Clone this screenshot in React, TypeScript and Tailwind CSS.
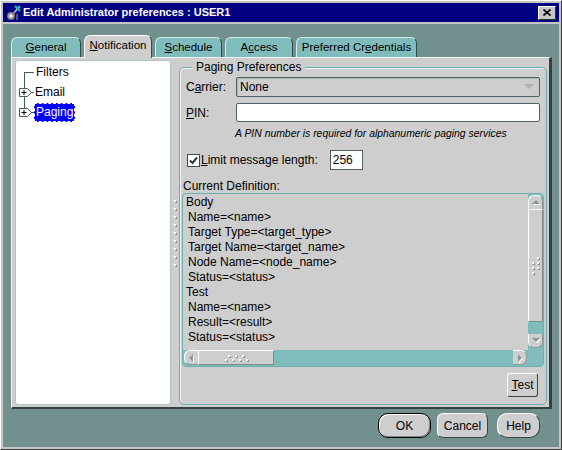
import React from 'react';

const LINES = [
  { text: 'Body', indent: false },
  { text: 'Name=<name>', indent: true },
  { text: 'Target Type=<target_type>', indent: true },
  { text: 'Target Name=<target_name>', indent: true },
  { text: 'Node Name=<node_name>', indent: true },
  { text: 'Status=<status>', indent: true },
  { text: 'Test', indent: false },
  { text: 'Name=<name>', indent: true },
  { text: 'Result=<result>', indent: true },
  { text: 'Status=<status>', indent: true },
];

function Dot() {
  return <span className="block w-[2px] h-[2px] bg-white shadow-[1px_1px_0_#8c8c8c]" />;
}

function Tab({ children, w, active }: { children: React.ReactNode; w: string; active?: boolean }) {
  return (
    <div
      className={
        active
          ? `${w} h-[23px] -mb-[1px] relative z-10 pb-[2px] bg-[#cecece] border-t border-l border-white border-r border-r-[#3c4848] rounded-t-[6px] flex items-center justify-center text-[11.5px]`
          : `${w} h-[20px] bg-[#80bcbc] border-t border-l border-[#d6eeee] border-r border-r-[#2e4c4c] rounded-t-[6px] flex items-center justify-center text-[11.5px]`
      }
    >
      {children}
    </div>
  );
}

function Arrow({ dir }: { dir: 'up' | 'down' | 'left' | 'right' }) {
  const pts = {
    up: '1,6 5,2 9,6',
    down: '1,2 5,6 9,2',
    left: '6,1 2,5 6,9',
    right: '3,1 7,5 3,9',
  }[dir];
  return (
    <svg width="10" height="10" viewBox="0 0 10 10">
      <polygon points={pts} fill="#ffffff" transform="translate(1,1)" />
      <polygon points={pts} fill="#8c9696" />
    </svg>
  );
}

function TreeCell({ kind }: { kind: 'first' | 'mid' | 'last' }) {
  return (
    <svg width="18" height="20" viewBox="0 0 18 20" className="shrink-0">
      {kind === 'first' && (
        <>
          <line x1="8.5" y1="10" x2="8.5" y2="20" stroke="#3e5c5c" />
          <line x1="8" y1="10.5" x2="18" y2="10.5" stroke="#3e5c5c" />
        </>
      )}
      {kind === 'mid' && <line x1="8.5" y1="0" x2="8.5" y2="20" stroke="#3e5c5c" />}
      {kind === 'last' && <line x1="8.5" y1="0" x2="8.5" y2="7" stroke="#3e5c5c" />}
      {kind !== 'first' && (
        <>
          <path d="M3.5 6.5 H11.5 L15.5 10.5 L11.5 14.5 H3.5 Z" fill="#ffffff" stroke="#3e5c5c" />
          <line x1="15" y1="10.5" x2="18" y2="10.5" stroke="#3e5c5c" />
          <line x1="5.5" y1="10.5" x2="10.5" y2="10.5" stroke="#000" />
          <line x1="8" y1="8" x2="8" y2="13" stroke="#000" />
        </>
      )}
    </svg>
  );
}

export default function App() {
  return (
    <div className="w-[562px] h-[450px] bg-[#c6c6c6] border-l border-t border-white border-r border-b border-r-[#3a3a3a] border-b-[#3a3a3a] p-[2px] flex flex-col font-['Liberation_Sans',Arial,sans-serif] text-black overflow-hidden">
      {/* Title bar */}
      <div className="h-[19px] bg-[#000080] flex items-center pl-[2px] shrink-0">
        <svg width="17" height="16" viewBox="0 0 17 16" className="shrink-0">
          <circle cx="6" cy="11" r="4" fill="#9a9a9a" stroke="#303030" strokeWidth="1" strokeDasharray="2 1" />
          <circle cx="6" cy="11" r="1.5" fill="#ffffff" />
          <line x1="9" y1="8" x2="13" y2="3" stroke="#c0c0c0" strokeWidth="1.5" />
          <path d="M10 1 L15 6" stroke="#20c0a0" strokeWidth="2" />
          <circle cx="14" cy="2" r="1.5" fill="#40a0ff" />
          <line x1="12" y1="9" x2="12" y2="15" stroke="#a0a0a0" />
        </svg>
        <span className="ml-[1px] text-white font-bold text-[11px] leading-none">
          Edit Administrator preferences : USER1
        </span>
        <div className="ml-auto mr-[3px] w-[18px] h-[14px] bg-[#c6c6c6] border-t border-l border-white border-r border-b border-r-[#303030] border-b-[#303030] flex items-center justify-center">
          <svg width="8" height="7" viewBox="0 0 8 7">
            <path d="M0.5 0.5 L7.5 6.5 M7.5 0.5 L0.5 6.5" stroke="#000" strokeWidth="1.6" />
          </svg>
        </div>
      </div>

      {/* Body */}
      <div className="mt-[2px] flex-1 bg-[#71908e] flex flex-col pl-[8px] pr-[7px] pt-[11px]">
        {/* Tabs */}
        <div className="h-[22px] flex items-end gap-[3px] shrink-0">
          <Tab w="w-[70px]">
            <span><span className="underline">G</span>eneral</span>
          </Tab>
          <Tab w="w-[68px]" active>
            <span><span className="underline">N</span>otification</span>
          </Tab>
          <Tab w="w-[67px]">
            <span><span className="underline">S</span>chedule</span>
          </Tab>
          <Tab w="w-[68px]">
            <span>A<span className="underline">c</span>cess</span>
          </Tab>
          <Tab w="w-[121px]">
            <span>Preferred Cr<span className="underline">e</span>dentials</span>
          </Tab>
        </div>

        {/* Tab panel */}
        <div className="h-[352px] shrink-0 bg-[#cecece] border-t border-l border-[#f4f4f4] border-r-[3px] border-b-[2px] border-r-[#34403f] border-b-[#34403f] flex pl-[3px] pt-[2px]">
          {/* Tree */}
          <div className="w-[156px] h-[345px] bg-white border border-[#b4c4c4] rounded-[3px] pt-[1px] text-[12px] shrink-0">
            <div className="flex items-center h-[20px]">
              <TreeCell kind="first" />
              <span className="ml-[2px]">Filters</span>
            </div>
            <div className="flex items-center h-[20px]">
              <TreeCell kind="mid" />
              <span className="ml-[1px]">Email</span>
            </div>
            <div className="flex items-center h-[20px]">
              <TreeCell kind="last" />
              <span className="bg-[#0000ff] text-white px-[1px] h-[19px] leading-[17px] border border-dashed border-white">
                Paging
              </span>
            </div>
          </div>

          {/* Splitter grip */}
          <div className="w-[8px] shrink-0 flex flex-col items-center pt-[140px] gap-[6px]">
            {Array.from({ length: 9 }).map((_, i) => (
              <Dot key={i} />
            ))}
          </div>

          {/* Paging preferences group */}
          <div className="mt-[7px] w-[368px] h-[338px] border border-[#68adad] rounded-[5px] shadow-[inset_1px_1px_0_#f4f4f4] flex flex-col text-[12px]">
            <span className="block w-fit ml-[12px] px-[4px] -mt-[8px] bg-[#cecece] leading-[14px]">
              Paging Preferences
            </span>

            <div className="mt-[3px] h-[20px] flex items-center pl-[6px] pr-[6px]">
              <span className="w-[50px] shrink-0">
                C<span className="underline">a</span>rrier:
              </span>
              <div className="flex-1 h-[20px] bg-[#cecece] border border-[#4e6464] rounded-[2px] shadow-[inset_1px_1px_0_#a8b8b8] flex items-center pl-[3px] pr-[5px]">
                <span>None</span>
                <svg width="10" height="6" viewBox="0 0 10 6" className="ml-auto">
                  <polygon points="0,0 10,0 5,5" fill="#b0b0b0" />
                </svg>
              </div>
            </div>

            <div className="mt-[6px] h-[19px] flex items-center pl-[6px] pr-[6px]">
              <span className="w-[50px] shrink-0">
                <span className="underline">P</span>IN:
              </span>
              <div className="flex-1 h-[19px] bg-white border border-[#4e6464] rounded-[2px]" />
            </div>

            <div className="mt-[6px] h-[11px] leading-[11px] pl-[55px] text-[10.4px] italic">
              A PIN number is required for alphanumeric paging services
            </div>

            <div className="mt-[11px] h-[20px] flex items-center pl-[7px]">
              <div className="w-[13px] h-[13px] bg-white border border-[#404848] flex items-center justify-center shrink-0">
                <svg width="9" height="9" viewBox="0 0 9 9">
                  <path d="M1 4.5 L3.5 7 L8 1.5" stroke="#2c3838" strokeWidth="2" fill="none" />
                </svg>
              </div>
              <span className="ml-[1px]">
                <span className="underline">L</span>imit message length:
              </span>
              <div className="ml-[12px] w-[33px] h-[20px] bg-white border border-[#4e6464] flex items-center pl-[2px]">
                256
              </div>
            </div>

            <div className="mt-[10px] leading-[12px] pl-[3px]">Current Definition:</div>

            {/* Definition text area */}
            <div className="mt-[1px] mx-[2px] h-[174px] border border-[#6cb0b0] rounded-[4px] flex flex-col overflow-hidden">
              <div className="flex flex-1 min-h-0">
                <div className="flex-1 pl-[3px] pt-[1px] leading-[15px]">
                  {LINES.map((l, i) => (
                    <div key={i} className={l.indent ? 'pl-[2px]' : ''}>
                      {l.text}
                    </div>
                  ))}
                </div>
                <div className="w-[15px] bg-[#80bcbc] flex flex-col pt-[1px] pb-[2px]">
                  <div className="h-[14px] bg-[#cecece] rounded-t-[6px] border-t border-l border-white border-r border-r-[#8a9a9a] flex items-center justify-center">
                    <Arrow dir="up" />
                  </div>
                  <div className="h-[113px] bg-[#cecece] border-t border-l border-white border-r border-b border-r-[#7c8c8c] border-b-[#7c8c8c] flex items-center justify-center">
                    <div className="grid grid-cols-2 gap-x-[3px] gap-y-[3px]">
                      <span />
                      <Dot />
                      <Dot />
                      <Dot />
                      <Dot />
                      <Dot />
                      <Dot />
                      <span />
                    </div>
                  </div>
                  <div className="flex-1" />
                  <div className="h-[14px] bg-[#cecece] rounded-b-[6px] border-l border-white border-r border-b border-r-[#8a9a9a] border-b-[#8a9a9a] flex items-center justify-center">
                    <Arrow dir="down" />
                  </div>
                </div>
              </div>
              <div className="h-[16px] bg-[#80bcbc] flex pl-[1px] pb-[1px] shrink-0">
                <div className="w-[14px] bg-[#cecece] rounded-l-[6px] border-t border-l border-white border-b border-b-[#8a9a9a] flex items-center justify-center">
                  <Arrow dir="left" />
                </div>
                <div className="w-[76px] bg-[#cecece] border-t border-l border-white border-r border-b border-r-[#7c8c8c] border-b-[#7c8c8c] flex items-center justify-center">
                  <div className="flex flex-col gap-[2px]">
                    <div className="flex gap-[5px] pl-[3px]">
                      <Dot />
                      <Dot />
                      <Dot />
                    </div>
                    <div className="flex gap-[5px]">
                      <Dot />
                      <Dot />
                      <Dot />
                      <Dot />
                    </div>
                  </div>
                </div>
                <div className="flex-1" />
                <div className="w-[14px] bg-[#cecece] rounded-r-[6px] border-t border-white border-r border-b border-r-[#8a9a9a] border-b-[#8a9a9a] flex items-center justify-center">
                  <Arrow dir="right" />
                </div>
                <div className="w-[16px]" />
              </div>
            </div>

            <div className="mt-[6px] flex justify-end pr-[8px]">
              <div className="w-[31px] h-[24px] bg-[#cecece] rounded-[3px] border border-t-white border-l-white border-r-[#3a4444] border-b-[#3a4444] flex items-center justify-center">
                <span>
                  <span className="underline">T</span>est
                </span>
              </div>
            </div>
          </div>
        </div>

        {/* Dialog buttons */}
        <div className="mt-[4px] h-[25px] flex justify-end mr-[12px] text-[12px] shrink-0">
          <div className="w-[53px] h-[25px] bg-[#cecece] rounded-[10px] border border-black shadow-[inset_1px_1px_0_#ffffff,inset_-1px_-1px_0_#808888] flex items-center justify-center">
            OK
          </div>
          <div className="ml-[6px] w-[51px] h-[25px] bg-[#cecece] rounded-[6px] border border-t-white border-l-white border-r-[#3a4444] border-b-[#3a4444] flex items-center justify-center">
            Cancel
          </div>
          <div className="ml-[9px] w-[43px] h-[25px] bg-[#cecece] rounded-[10px] border border-t-white border-l-white border-r-[#3a4444] border-b-[#3a4444] flex items-center justify-center">
            Help
          </div>
        </div>
      </div>
    </div>
  );
}
